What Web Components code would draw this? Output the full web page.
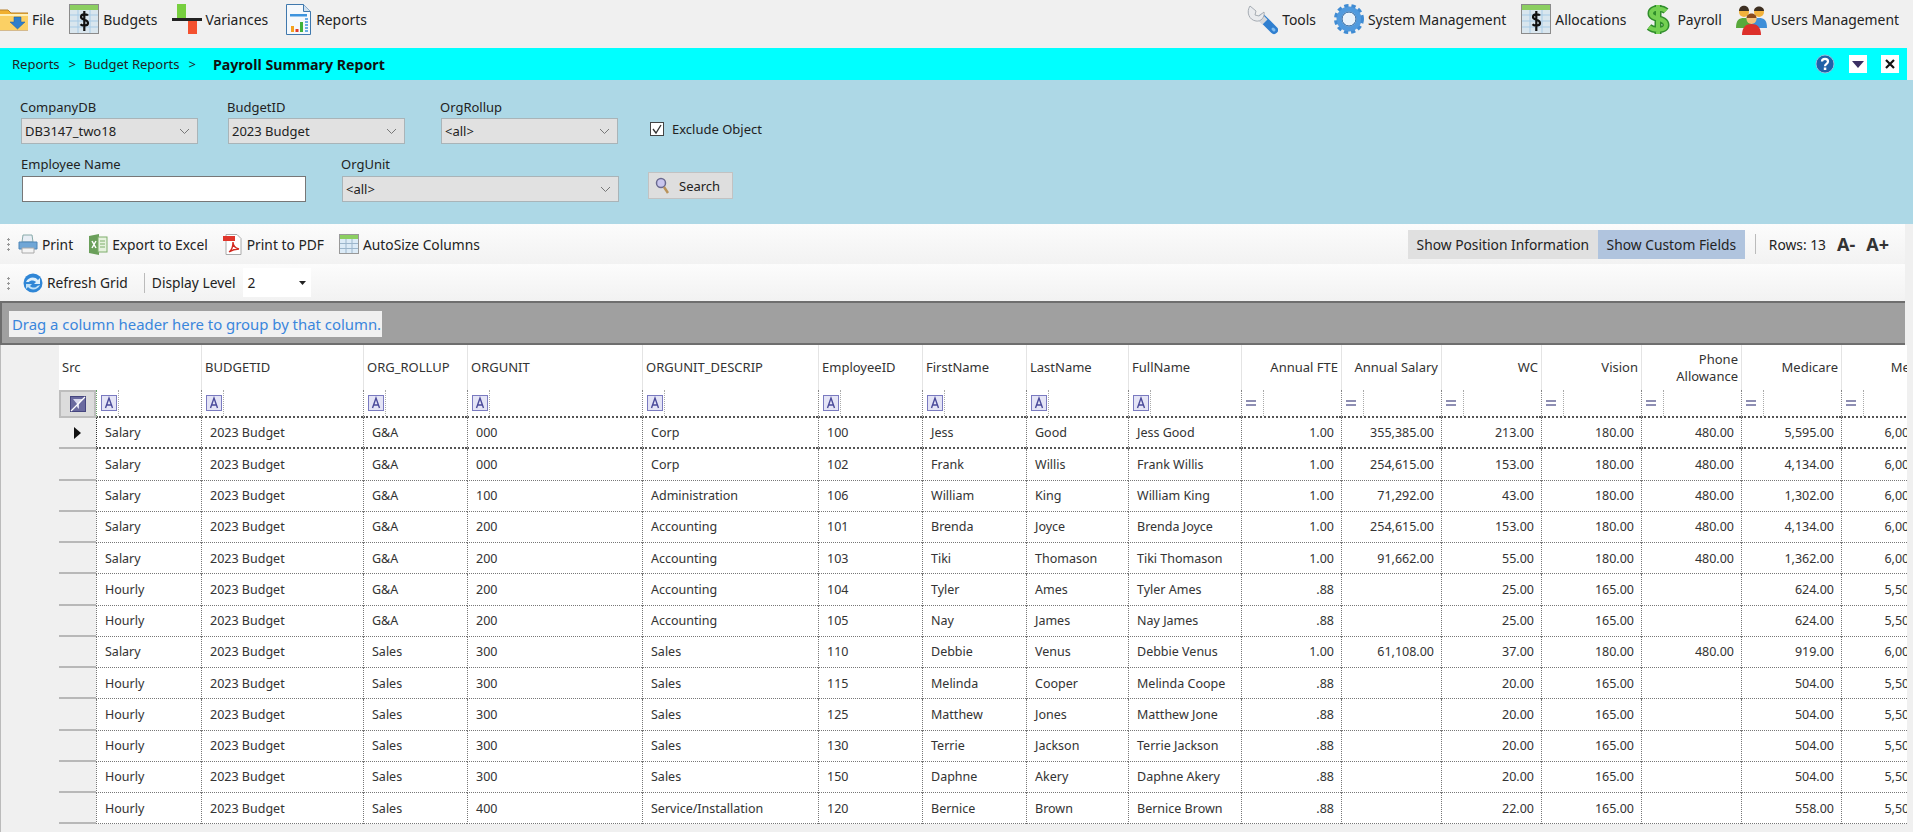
<!DOCTYPE html>
<html>
<head>
<meta charset="utf-8">
<title>Payroll Summary Report</title>
<style>
  html, body { margin: 0; height: 100%; background: #f0f0f0; overflow: hidden; }
  body { font: 13px "Noto Sans", "Open Sans", sans-serif; color: #222; }
</style>
</head>
<body>
<app-menubar>
  <menu-item icon="folder" gap="4" after="15" label="File"></menu-item>
  <menu-item icon="sheet" after="15" label="Budgets"></menu-item>
  <menu-item icon="variance" gap="3" after="18" label="Variances"></menu-item>
  <menu-item icon="report" gap="5" label="Reports"></menu-item>
  <menu-item slot="right" icon="wrench" after="18" label="Tools"></menu-item>
  <menu-item slot="right" icon="gear" after="15" label="System Management"></menu-item>
  <menu-item slot="right" icon="sheet" after="20" label="Allocations"></menu-item>
  <menu-item slot="right" icon="dollar" gap="7" after="14" label="Payroll"></menu-item>
  <menu-item slot="right" icon="users" label="Users Management"></menu-item>
</app-menubar>
<crumb-bar></crumb-bar>
<filter-panel></filter-panel>
<grid-toolbar kind="main"></grid-toolbar>
<grid-toolbar kind="level"></grid-toolbar>
<group-panel>Drag a column header here to group by that column.</group-panel>
<data-grid></data-grid>

<script>
const ICONS = {
  folder: `<svg width="28" height="24" viewBox="0 0 28 24"><path d="M-2 3h10l3 3h17v17H-2z" fill="#f0b030" stroke="#b8812a"/><path d="M-2 9h30v14H-2z" fill="#fbd064"/><path d="M-2 7h30v2H-2z" fill="#fff0b8"/><path d="M14 10h7v5h4l-7.500 7-7.500-7h4z" fill="#2f7fcb" stroke="#1d5f9e" stroke-width=".5"/></svg>`,
  sheet: `<svg width="30" height="30" viewBox="0 0 30 30"><rect x=".5" y=".5" width="29" height="29" fill="#d9e6ee" stroke="#8b8b8b"/><rect x="1" y="1" width="28" height="5" fill="#8ccf62"/><path d="M1 11h28M1 17h28M1 23h28M9 6v23M21 6v23" stroke="#a7cbe6"/><path d="M19 11.500c-1-1.500-7-2-7 1.500 0 3.500 7 2 7 6 0 3.500-6 3-7.500 1.200M15.300 7v20" fill="none" stroke="#111" stroke-width="2.200"/></svg>`,
  variance: `<svg width="30" height="30" viewBox="0 0 30 30"><rect x="5" y="0" width="9" height="14" fill="#77cf3f"/><rect x="16" y="16" width="9" height="14" fill="#f4512f"/><rect x="0" y="14" width="30" height="3" fill="#222"/></svg>`,
  report: `<svg width="25" height="31" viewBox="0 0 25 31"><path d="M.5.500h17l7 7v23H.5z" fill="#f4f8fc" stroke="#3f78ad"/><path d="M17.500.500v7h7" fill="#cfe0ef" stroke="#3f78ad"/><rect x="4" y="10" width="17" height="2.500" fill="#3c93dd"/><rect x="5" y="22" width="3" height="6" fill="#f4a21f"/><rect x="9.500" y="25" width="3" height="3" fill="#e03c2a"/><rect x="14" y="18" width="3" height="10" fill="#3fb23a"/><path d="M19 15h3M19 18h3M19 21h3M19 24h3M19 27h3" stroke="#3c93dd" stroke-width="1.500"/></svg>`,
  wrench: `<svg width="31" height="31" viewBox="0 0 31 31"><path d="M15 14l12 12" stroke="#2f7fd0" stroke-width="8" stroke-linecap="round"/><path d="M26 25l1 1" stroke="#7fbcf0" stroke-width="3" stroke-linecap="round"/><path d="M12 12l6 6" stroke="#d5d8dc" stroke-width="7"/><path d="M3 2l6 5-1 4 4 1 5-4c1 5-3 10-8 9C2 16-1 8 3 2z" fill="#e9ebee" stroke="#a6acb3"/></svg>`,
  gear: `<svg width="30" height="30" viewBox="0 0 30 30"><circle cx="15" cy="15" r="10" fill="none" stroke="#4f9ade" stroke-width="5"/><circle cx="15" cy="15" r="13.500" fill="none" stroke="#3f8bd3" stroke-width="3" stroke-dasharray="4.300 3"/><circle cx="15" cy="15" r="7" fill="#e8f2fa" stroke="#1f5f9f"/></svg>`,
  dollar: `<svg width="24" height="31" viewBox="0 0 24 31"><path d="M20 7c-3-3-15-4-15 2.500C5 16 20 13 20 21c0 6-12 6-17 2M12 1v29" fill="none" stroke="#2f8d2b" stroke-width="7"/><path d="M20 7c-3-3-15-4-15 2.500C5 16 20 13 20 21c0 6-12 6-17 2M12 1v29" fill="none" stroke="#74d052" stroke-width="4"/></svg>`,
  users: `<svg width="31" height="31" viewBox="0 0 31 31"><circle cx="8" cy="8" r="5" fill="#f2b23c"/><path d="M3 7c0-7 10-7 10 0z" fill="#3d2f22"/><path d="M0 24c0-8 3-10 8-10s8 2 8 10z" fill="#58a83b"/><circle cx="23" cy="8" r="5" fill="#f2b23c"/><path d="M18 7c0-6 10-6 10 0z" fill="#3d2f22"/><path d="M15 24c0-8 3-10 8-10s8 2 8 10z" fill="#3f8fd8"/><circle cx="15.500" cy="15" r="5" fill="#f6c27a"/><path d="M10.500 14c0-6 10-6 10 0z" fill="#8a4a1c"/><path d="M6 31c0-8 4-11 9.500-11S25 23 25 31z" fill="#dd2f2a"/></svg>`,
  help: `<svg width="20" height="20" viewBox="0 0 20 20" style="display:block"><circle cx="10" cy="10" r="9" fill="#1f62a8" stroke="#9bbbdc"/><path d="M7 7.500c0-3.500 6-3.500 6 0 0 2.500-3 2.200-3 4.800" fill="none" stroke="#fff" stroke-width="2.200"/><rect x="8.800" y="13.500" width="2.500" height="2.500" fill="#fff"/></svg>`,
  printer: `<svg width="20" height="20" viewBox="0 0 20 20"><path d="M5 1h9l1 7H4z" fill="#e8eef5" stroke="#8aa"/><path d="M1 8h18v7H1z" fill="#6fa6d6" stroke="#4f86b8"/><path d="M4 14h12v5H4z" fill="#f4f4f4" stroke="#aaa"/></svg>`,
  excel: `<svg width="20" height="21" viewBox="0 0 20 21"><path d="M1 2l10-2v21L1 19z" fill="#6a9f5a"/><rect x="10" y="3" width="9" height="15" fill="#e6f2de" stroke="#7fae6c"/><path d="M12 7h5M12 10h5M12 13h5" stroke="#7fae6c"/><path d="M4 7l4 7M8 7l-4 7" stroke="#fff" stroke-width="1.500"/></svg>`,
  pdf: `<svg width="20" height="21" viewBox="0 0 20 21"><path d="M3 .500h11l4 4v16H3z" fill="#fff" stroke="#aaa"/><rect x="0" y="2" width="12" height="5" fill="#e0352b"/><path d="M6 18c3-2 4-7 4-10 0 4 2 6 6 7-4 0-7 1-10 3z" fill="none" stroke="#d3291f" stroke-width="1.400"/></svg>`,
  table: `<svg width="20" height="20" viewBox="0 0 20 20"><rect x=".5" y=".5" width="19" height="19" fill="#dcebf7" stroke="#999"/><rect x="1" y="1" width="18" height="4" fill="#8ccf62"/><path d="M1 9.500h18M1 14.500h18M7 5v14M13 5v14" stroke="#9cb6cc"/></svg>`,
  refresh: `<svg width="20" height="20" viewBox="0 0 20 20"><circle cx="10" cy="10" r="9.500" fill="#2f86d6"/><path d="M3 9c2-5 9-6 12-2l2-2v6h-6l2-2c-2-2-6-2-7 0z" fill="#dff0fb"/><path d="M17 12c-2 5-9 6-12 2l-2 2v-5h6l-2 2c2 2 6 2 7 0z" fill="#bfe1f7"/></svg>`,
  search: `<svg width="14" height="18" viewBox="0 0 14 18"><circle cx="6" cy="6" r="4.500" fill="#c9c6ee" stroke="#6a6a90" stroke-width="1.500"/><path d="M9 10l4 6" stroke="#b9935a" stroke-width="2.500"/></svg>`
};

class MenuItem extends HTMLElement {
  constructor() {
    super();
    this.attachShadow({ mode: 'open' });
    const gap = this.getAttribute('gap') || 4;
    const after = this.getAttribute('after') || 0;
    this.shadowRoot.innerHTML = `
      <style>
        :host { display: flex; align-items: center; gap: ${gap}px; margin-right: ${after}px; font-size: 13.900px; color: #222; }
        svg { display: block; }
      </style>
      ${ICONS[this.getAttribute('icon')]}<span>${this.getAttribute('label')}</span>`;
  }
}
customElements.define('menu-item', MenuItem);

class AppMenubar extends HTMLElement {
  constructor() {
    super();
    this.attachShadow({ mode: 'open' });
    this.shadowRoot.innerHTML = `
      <style>
        :host { display: flex; height: 48px; padding: 2px 14px 0 0; box-sizing: border-box; justify-content: space-between; align-items: flex-start; background: #f0f0f0; }
        div { display: flex; align-items: center; height: 34px; }
      </style>
      <div><slot></slot></div>
      <div><slot name="right"></slot></div>`;
  }
}
customElements.define('app-menubar', AppMenubar);

class CrumbBar extends HTMLElement {
  constructor() {
    super();
    this.attachShadow({ mode: 'open' });
    this.shadowRoot.innerHTML = `
      <style>
        :host { display: flex; align-items: center; height: 32px; margin-right: 6px; padding: 0 8px 0 12px; background: #00ffff; color: #222; font-size: 13px; }
        .sep { margin: 0 8px 0 9px; }
        b { margin-left: 9px; font-size: 14.200px; color: #111; }
        .right { margin-left: auto; display: flex; align-items: center; gap: 14px; }
        .box { width: 18px; height: 18px; background: #fff; display: flex; align-items: center; justify-content: center; }
      </style>
      <span>Reports</span><span class="sep">&gt;</span><span>Budget Reports</span><span class="sep">&gt;</span><b>Payroll Summary Report</b>
      <div class="right">
        ${ICONS.help}
        <div class="box"><svg width="12" height="7" viewBox="0 0 12 7"><path d="M0 0h12L6 7z" fill="#3b2f63"/></svg></div>
        <div class="box"><svg width="10" height="10" viewBox="0 0 10 10"><path d="M1 1l8 8M9 1L1 9" stroke="#111" stroke-width="2.200"/></svg></div>
      </div>`;
  }
}
customElements.define('crumb-bar', CrumbBar);

class FilterSelect extends HTMLElement {
  constructor() {
    super();
    this.attachShadow({ mode: 'open' });
    this.shadowRoot.innerHTML = `
      <style>
        :host { display: block; font-size: 13px; color: #222; }
        label { display: block; height: var(--label-height, 20px); line-height: 18px; margin-left: -1px; }
        .box { height: 26px; box-sizing: border-box; display: flex; align-items: center; justify-content: space-between; padding: 0 7px 0 3px; background: #e1e1e1; border: 1px solid #a9b4b8; }
        .input { background: #fff; border-color: #777; }
        svg { display: block; }
      </style>
      <label></label>
      <div class="box ${this.hasAttribute('input') ? 'input' : ''}">
        <span></span>
        ${this.hasAttribute('input') ? '' : '<svg width="11" height="7" viewBox="0 0 11 7"><path d="M1 1l4.500 4.500L10 1" fill="none" stroke="#777"/></svg>'}
      </div>`;
    this.shadowRoot.querySelector('label').textContent = this.getAttribute('label');
    this.shadowRoot.querySelector('span').textContent = this.getAttribute('value') || '';
    this.style.width = this.getAttribute('width') + 'px';
  }
}
customElements.define('filter-select', FilterSelect);

class FilterPanel extends HTMLElement {
  constructor() {
    super();
    this.attachShadow({ mode: 'open' });
    this.shadowRoot.innerHTML = `
      <style>
        :host { display: block; height: 144px; box-sizing: border-box; padding: 18px 0 0 21px; background: #add8e6; margin-right: 0; }
        .row { display: flex; align-items: flex-start; }
        .row + .row { margin-top: 11px; --label-height: 21px; }
        .check { display: flex; align-items: center; gap: 8px; margin: 22px 0 0 32px; font-size: 13px; color: #222; }
        .tick { width: 14px; height: 14px; box-sizing: border-box; border: 1px solid #444; background: #fff; }
        .tick svg { display: block; }
        button { all: unset; display: flex; align-items: center; gap: 10px; width: 85px; height: 27px; box-sizing: border-box; margin: 17px 0 0 30px; padding-left: 6px; background: #dedede; border: 1px solid #c2c2c2; font-size: 13px; color: #222; }
        svg { display: block; }
      </style>
      <div class="row">
        <filter-select label="CompanyDB" value="DB3147_two18" width="177"></filter-select>
        <filter-select label="BudgetID" value="2023 Budget" width="177" style="margin-left:30px"></filter-select>
        <filter-select label="OrgRollup" value="&lt;all&gt;" width="177" style="margin-left:36px"></filter-select>
        <div class="check"><div class="tick"><svg width="12" height="12" viewBox="0 0 12 12"><path d="M2 6l3 4 5-8" fill="none" stroke="#333" stroke-width="1.300"/></svg></div>Exclude Object</div>
      </div>
      <div class="row">
        <filter-select input label="Employee Name" width="284" style="margin-left:1px"></filter-select>
        <filter-select label="OrgUnit" value="&lt;all&gt;" width="277" style="margin-left:36px"></filter-select>
        <button style="margin-left:29px">${ICONS.search}<span>Search</span></button>
      </div>`;
  }
}
customElements.define('filter-panel', FilterPanel);

class GridToolbar extends HTMLElement {
  constructor() {
    super();
    this.attachShadow({ mode: 'open' });
    const tool = (icon, text, ml) => `<span class="tool" style="margin-left:${ml}px">${ICONS[icon]}${text}</span>`;
    const main = `
      ${tool('printer', 'Print', 8)}${tool('excel', 'Export to Excel', 15)}${tool('pdf', 'Print to PDF', 15)}${tool('table', 'AutoSize Columns', 15)}
      <div class="right">
        <span class="flag" style="width:190px">Show Position Information</span><span class="flag on" style="width:147px">Show Custom Fields</span>
        <i class="sep" style="margin:0 13px 0 10px"></i>
        <span>Rows: 13</span>
        <b style="margin-left:11px">A-</b><b style="margin-left:11px">A+</b>
      </div>`;
    const level = `
      ${tool('refresh', 'Refresh Grid', 13)}
      <i class="sep" style="margin:0 7px 0 16px"></i>
      <span>Display Level</span>
      <span class="combo">2<svg width="7" height="4" viewBox="0 0 7 4"><path d="M0 0h7L3.500 4z" fill="#222"/></svg></span>`;
    const isMain = this.getAttribute('kind') === 'main';
    this.shadowRoot.innerHTML = `
      <style>
        :host { display: flex; align-items: center; height: ${isMain ? 40 : 37}px; margin: 0 8px 0 0; padding-left: 7px; box-sizing: border-box; background: linear-gradient(#fcfcfc, #f2f2f2); border-radius: 0 0 4px 0; font-size: 13.800px; color: #222; }
        .grip { width: 3px; height: 14px; background: radial-gradient(circle, #999 1px, transparent 1.300px) 0 0 / 3px 5px; }
        .tool { display: flex; align-items: center; gap: 4px; }
        svg { display: block; }
        .right { margin-left: auto; display: flex; align-items: center; padding-right: 16px; }
        .flag { height: 29px; line-height: 29px; text-align: center; background: #e0e0e0; }
        .on { background: #b0c4de; }
        .sep { display: block; width: 1px; height: 20px; background: #bbb; }
        b { font: bold 18px "Noto Sans", sans-serif; color: #333; }
        .combo { display: flex; align-items: center; justify-content: space-between; width: 68px; height: 29px; box-sizing: border-box; margin-left: 7px; padding: 0 5px; background: #fff; }
      </style>
      <div class="grip"></div>${isMain ? main : level}`;
  }
}
customElements.define('grid-toolbar', GridToolbar);

class GroupPanel extends HTMLElement {
  constructor() {
    super();
    this.attachShadow({ mode: 'open' });
    this.shadowRoot.innerHTML = `
      <style>
        :host { display: block; height: 44px; box-sizing: border-box; margin-right: 8px; padding: 8px 0 0 7px; background: #a0a0a0; border: 2px solid #6e6e6e; border-width: 2px 0 2px 2px; }
        div { display: inline-block; width: 373px; height: 26px; line-height: 26px; box-sizing: border-box; padding-left: 3px; background: #f0f0f0; color: #3a86dc; font-size: 14.900px; white-space: nowrap; }
      </style>
      <div><slot></slot></div>`;
  }
}
customElements.define('group-panel', GroupPanel);

const COLUMNS = [
  ['Src', 105], ['BUDGETID', 162], ['ORG_ROLLUP', 104], ['ORGUNIT', 175], ['ORGUNIT_DESCRIP', 176],
  ['EmployeeID', 104], ['FirstName', 104], ['LastName', 102], ['FullName', 113],
  ['Annual FTE', 100, 1], ['Annual Salary', 100, 1], ['WC', 100, 1], ['Vision', 100, 1],
  ['Phone<br>Allowance', 100, 1], ['Medicare', 100, 1], ['Medical', 100, 1]
];

// src, rollup, unit, descrip, id, first, last, full, fte, salary, wc, vision, phone, medicare, medical
const ROWS = [
  ['Salary', 'G&amp;A', '000', 'Corp', '100', 'Jess', 'Good', 'Jess Good', '1.00', '355,385.00', '213.00', '180.00', '480.00', '5,595.00', '6,000.00'],
  ['Salary', 'G&amp;A', '000', 'Corp', '102', 'Frank', 'Willis', 'Frank Willis', '1.00', '254,615.00', '153.00', '180.00', '480.00', '4,134.00', '6,000.00'],
  ['Salary', 'G&amp;A', '100', 'Administration', '106', 'William', 'King', 'William King', '1.00', '71,292.00', '43.00', '180.00', '480.00', '1,302.00', '6,000.00'],
  ['Salary', 'G&amp;A', '200', 'Accounting', '101', 'Brenda', 'Joyce', 'Brenda Joyce', '1.00', '254,615.00', '153.00', '180.00', '480.00', '4,134.00', '6,000.00'],
  ['Salary', 'G&amp;A', '200', 'Accounting', '103', 'Tiki', 'Thomason', 'Tiki Thomason', '1.00', '91,662.00', '55.00', '180.00', '480.00', '1,362.00', '6,000.00'],
  ['Hourly', 'G&amp;A', '200', 'Accounting', '104', 'Tyler', 'Ames', 'Tyler Ames', '.88', '', '25.00', '165.00', '', '624.00', '5,500.00'],
  ['Hourly', 'G&amp;A', '200', 'Accounting', '105', 'Nay', 'James', 'Nay James', '.88', '', '25.00', '165.00', '', '624.00', '5,500.00'],
  ['Salary', 'Sales', '300', 'Sales', '110', 'Debbie', 'Venus', 'Debbie Venus', '1.00', '61,108.00', '37.00', '180.00', '480.00', '919.00', '6,000.00'],
  ['Hourly', 'Sales', '300', 'Sales', '115', 'Melinda', 'Cooper', 'Melinda Coope', '.88', '', '20.00', '165.00', '', '504.00', '5,500.00'],
  ['Hourly', 'Sales', '300', 'Sales', '125', 'Matthew', 'Jones', 'Matthew Jone', '.88', '', '20.00', '165.00', '', '504.00', '5,500.00'],
  ['Hourly', 'Sales', '300', 'Sales', '130', 'Terrie', 'Jackson', 'Terrie Jackson', '.88', '', '20.00', '165.00', '', '504.00', '5,500.00'],
  ['Hourly', 'Sales', '300', 'Sales', '150', 'Daphne', 'Akery', 'Daphne Akery', '.88', '', '20.00', '165.00', '', '504.00', '5,500.00'],
  ['Hourly', 'Sales', '400', 'Service/Installation', '120', 'Bernice', 'Brown', 'Bernice Brown', '.88', '', '22.00', '165.00', '', '558.00', '5,500.00']
];

class DataGrid extends HTMLElement {
  constructor() {
    super();
    this.attachShadow({ mode: 'open' });
    const head = COLUMNS.map(([name, , num], i) => `<div class="head ${num ? 'num' : ''}" ${i === 0 ? 'style="grid-column:span 2;border-left:0"' : ''}><span>${name}</span></div>`).join('');
    const letter = `<svg width="16" height="16" viewBox="0 0 16 16"><rect x=".5" y=".5" width="15" height="15" fill="#e4e4f6" stroke="#7a7ac0"/><path d="M4.500 13l3.500-10 3.500 10M5.500 10h5" fill="none" stroke="#4a4a9a" stroke-width="1.400"/></svg>`;
    const equal = `<svg width="10" height="6" viewBox="0 0 10 6"><path d="M0 1h10M0 5h10" stroke="#6a6a9a" stroke-width="1.500"/></svg>`;
    const filters = COLUMNS.map(([, , num], i) => `<div class="filter" ${i === 0 ? 'style="border-left-color:#6aa56a"' : ''}><span class="op">${num ? equal : letter}</span></div>`).join('');
    const rows = ROWS.map((row, i) => {
      const vals = [row[0], '2023 Budget', ...row.slice(1)];
      return `<div class="sel">${i === 0 ? '<svg width="7" height="12" viewBox="0 0 7 12"><path d="M0 0l7 6-7 6z" fill="#111"/></svg>' : ''}</div>` +
        vals.map((v, c) => `<div class="cell ${COLUMNS[c][2] ? 'num' : ''} ${i === 0 ? 'first' : ''}" ${i === 0 && c === 0 ? 'style="border-left-color:#333"' : ''}>${v}</div>`).join('');
    }).join('');
    this.shadowRoot.innerHTML = `
      <style>
        :host { display: block; height: 487px; margin-right: 6px; padding-left: 58px; overflow: hidden; background: #f0f0f0; font-size: 12.500px; color: #333; border-left: 1px solid #bbb; box-sizing: border-box; }
        .grid { display: grid; width: max-content; grid-template-columns: 37px ${COLUMNS.map(c => c[1] + 'px').join(' ')}; grid-template-rows: 45px 28px repeat(13, 31.250px); background: #fff; }
        .head { display: flex; align-items: center; padding-left: 3px; border-left: 1px solid #e4e4e4; line-height: 17px; white-space: nowrap; color: #333; font-size: 13px; }
        .head.num { justify-content: flex-end; text-align: right; padding: 0 3px 0 0; }
        .fcorner { display: flex; align-items: center; justify-content: center; box-sizing: border-box; background: #dcdcdc; border: 2px solid #bdbdbd; }
        .filter { border-left: 1px dotted #888; border-bottom: 2px dotted #555; padding-left: 4px; display: flex; align-items: center; }
        .op { display: flex; align-items: center; width: 17px; height: 100%; border-right: 1px dotted #aaa; }
        .sel { display: flex; align-items: center; justify-content: center; background: #f0f0f0; border-bottom: 2px solid #b8b8b8; box-sizing: border-box; }
        .cell { display: flex; align-items: center; padding-left: 8px; border-left: 1px dotted #777; border-bottom: 1px dotted #777; overflow: hidden; white-space: nowrap; box-sizing: border-box; min-width: 0; }
        .cell.num { justify-content: flex-end; padding: 0 7px 0 0; }
        .cell.first { border-bottom: 2px dotted #555; }
        svg { display: block; }
      </style>
      <div class="grid">
        ${head}
        <div class="fcorner"><svg width="16" height="16" viewBox="0 0 16 16"><rect x=".5" y=".5" width="15" height="15" fill="#6a6a9f" stroke="#45457f"/><path d="M3 3h10L9 8v5l-2-2V8z" fill="#d9d9ee"/><path d="M1 15L15 1" stroke="#fff" stroke-width="1.200"/></svg></div>${filters}
        ${rows}
      </div>`;
  }
}
customElements.define('data-grid', DataGrid);
</script>
</body>
</html>
